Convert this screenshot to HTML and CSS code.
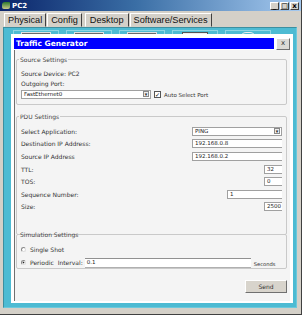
FILE: index.html
```html
<!DOCTYPE html>
<html lang="en">
<head>
<meta charset="UTF-8">
<meta name="viewport" content="width=device-width, initial-scale=1.0">
<title>PC2</title>
<link rel="stylesheet" href="styles.css">
</head>
<body>

<div class="janela">
    <div class="barra-titulo">
        <span class="icone-pc"></span>
        <span class="titulo">PC2</span>
        <div class="controles">
            <span class="ctrl">_</span><span class="ctrl">□</span><span class="ctrl">x</span>
        </div>
    </div>

    <div class="abas">
        <div class="aba">Physical</div>
        <div class="aba">Config</div>
        <div class="aba ativa">Desktop</div>
        <div class="aba">Software/Services</div>
    </div>

    <div class="area">
        <div class="icones">
            <div class="icone"><span class="forma"></span></div>
            <div class="icone"><span class="forma"></span></div>
            <div class="icone"><span class="forma"></span></div>
            <div class="icone"><span class="forma alta"></span></div>
            <div class="icone"><span class="forma redonda"></span></div>
        </div>

        <div class="dialogo">
            <div class="dialogo-topo">
                <div class="dialogo-titulo">Traffic Generator</div>
                <div class="fechar">x</div>
            </div>

            <div class="dialogo-corpo">
                <fieldset class="grupo grupo-origem">
                    <legend>Source Settings</legend>
                    <div class="linha-texto">Source Device: PC2</div>
                    <div class="linha-texto">Outgoing Port:</div>
                    <div class="linha-porta">
                        <div class="select porta">FastEthernet0<span class="seta">▾</span></div>
                        <span class="check marcado">✓</span>
                        <span class="rotulo-check">Auto Select Port</span>
                    </div>
                </fieldset>

                <fieldset class="grupo grupo-pdu">
                    <legend>PDU Settings</legend>
                    <div class="linha">
                        <span>Select Application:</span>
                        <div class="select app">PING<span class="seta">▾</span></div>
                    </div>
                    <div class="linha">
                        <span>Destination IP Address:</span>
                        <div class="campo largo">192.168.0.8</div>
                    </div>
                    <div class="linha">
                        <span>Source IP Address</span>
                        <div class="campo largo">192.168.0.2</div>
                    </div>
                    <div class="linha">
                        <span>TTL:</span>
                        <div class="campo curto">32</div>
                    </div>
                    <div class="linha">
                        <span>TOS:</span>
                        <div class="campo curto">0</div>
                    </div>
                    <div class="linha">
                        <span>Sequence Number:</span>
                        <div class="campo medio">1</div>
                    </div>
                    <div class="linha">
                        <span>Size:</span>
                        <div class="campo curto">2500</div>
                    </div>
                </fieldset>

                <fieldset class="grupo grupo-sim">
                    <legend>Simulation Settings</legend>
                    <div class="linha-radio">
                        <span class="radio"></span>
                        <span>Single Shot</span>
                    </div>
                    <div class="linha-radio">
                        <span class="radio marcado"></span>
                        <span class="periodico">Periodic</span>
                        <span>Interval:</span>
                        <div class="campo intervalo">0.1</div>
                        <span class="segundos">Seconds</span>
                    </div>
                </fieldset>

                <div class="rodape">
                    <div class="botao">Send</div>
                </div>
            </div>
        </div>
    </div>
</div>

</body>
</html>
```

FILE: styles.css
```css
    * {
        box-sizing: border-box;
    }

    body {
        margin: 0;
        font-family: "DejaVu Sans", Verdana, sans-serif;
        background-color: #d4d0c8;
    }

    .janela {
        width: 302px;
        height: 315px;
        background-color: #d4d0c8;
        border-right: 1px solid #404040;
        border-bottom: 1px solid #404040;
        display: flex;
        flex-direction: column;
    }

    .barra-titulo {
        height: 11px;
        background: linear-gradient(to right, #0a246a, #3a6ea5 45%, #a6caf0);
        display: flex;
        align-items: center;
        padding: 0 2px;
    }

    .icone-pc {
        width: 8px;
        height: 7px;
        background: linear-gradient(#2d7a2d, #c9c98a);
        border-radius: 3px 1px 2px 2px;
        margin-right: 2px;
    }

    .titulo {
        color: #fff;
        font-weight: bold;
        font-size: 7px;
    }

    .controles {
        margin-left: auto;
        display: flex;
        gap: 1px;
    }

    .ctrl {
        width: 9px;
        height: 8px;
        background-color: #d4d0c8;
        border: 1px solid;
        border-color: #fff #404040 #404040 #fff;
        font-size: 7px;
        line-height: 6px;
        text-align: center;
        font-weight: bold;
        color: #000;
    }

    .abas {
        height: 16px;
        display: flex;
        align-items: flex-end;
        padding-left: 4px;
        gap: 1px;
    }

    .aba {
        height: 14px;
        border: 1px solid;
        border-color: #fff #404040 transparent #fff;
        font-size: 9.2px;
        line-height: 12px;
        padding: 0 3px;
        color: #111;
        font-family: "Liberation Sans", Arial, sans-serif;
    }

    .aba.ativa {
        margin-left: 2px;
        padding: 0 4px;
    }

    .area {
        position: relative;
        flex: 1;
        margin: 0 4px 6px 3px;
        background-color: #4dbbd3;
        border: 1px solid #3c8fa0;
        border-right-color: #6cc9dc;
        border-bottom-color: #6cc9dc;
    }

    .icones {
        display: flex;
        gap: 7px;
        padding: 2px 0 0 9px;
    }

    .icone {
        width: 46px;
        height: 12px;
        border: 1px solid #8fd6e4;
        border-bottom: none;
        display: flex;
        justify-content: center;
        padding-top: 1px;
    }

    .forma {
        width: 30px;
        height: 8px;
        background-color: #6a6a6a;
        border: 1px solid #e0e0e0;
    }

    .forma.alta {
        width: 26px;
        background-color: #eee;
        border-color: #555;
    }

    .forma.redonda {
        width: 16px;
        border-radius: 6px 6px 0 0;
        background-color: transparent;
        border-color: #eee;
    }

    /* janela do gerador de trafego, por cima dos icones */
    .dialogo {
        position: absolute;
        left: 7px;
        top: 6px;
        width: 282px;
        height: 269px;
        background-color: #fff;
        padding: 4px 3px 2px 3px;
        display: flex;
        flex-direction: column;
    }

    .dialogo-topo {
        display: flex;
        gap: 2px;
        height: 12px;
    }

    .dialogo-titulo {
        flex: 1;
        background-color: #0000ff;
        color: #fff;
        font-weight: bold;
        font-size: 7.5px;
        line-height: 11px;
        padding-left: 2px;
        height: 11px;
    }

    .fechar {
        width: 14px;
        height: 12px;
        background-color: #dcdad5;
        border: 1px solid;
        border-color: #fff #707070 #707070 #fff;
        font-size: 7px;
        line-height: 9px;
        text-align: center;
        color: #333;
    }

    .dialogo-corpo {
        flex: 1;
        background-color: #f4f4f4;
        border-left: 1px solid #707070;
        padding: 6px 3px 0 1px;
        font-size: 6px;
        color: #333;
    }

    .grupo {
        margin: 0;
        border: 1px solid #c9c9c9;
        border-radius: 2px;
        padding: 0 4px 0 4px;
    }

    .grupo legend {
        padding: 0 1px;
        margin-left: -2px;
        color: #444;
        font-size: 6px;
    }

    .grupo-origem {
        height: 49px;
        padding-top: 6px;
    }

    .linha-texto {
        height: 10px;
        line-height: 10px;
    }

    .linha-porta {
        display: flex;
        align-items: center;
        margin-top: 1px;
    }

    .select {
        height: 9px;
        background-color: #fff;
        border: 1px solid #a0a0a0;
        font-size: 5.5px;
        line-height: 7px;
        padding-left: 2px;
        display: flex;
        justify-content: space-between;
        color: #222;
    }

    .seta {
        width: 6px;
        height: 6px;
        margin: 0 1px;
        border: 1px solid #888;
        background-color: #eee;
        font-size: 5px;
        line-height: 4px;
        text-align: center;
    }

    .select.porta {
        width: 130px;
    }

    .check {
        width: 7px;
        height: 7px;
        margin-left: 3px;
        border: 1px solid #555;
        background-color: #fff;
        font-size: 6px;
        line-height: 5px;
        text-align: center;
        color: #000;
    }

    .rotulo-check {
        margin-left: 3px;
        font-size: 5.5px;
    }

    .grupo-pdu {
        margin-top: 8px;
        height: 122px;
        padding-top: 5px;
    }

    .linha {
        display: flex;
        justify-content: space-between;
        align-items: center;
        height: 12.6px;
        font-weight: 500;
    }

    .campo {
        height: 9px;
        background-color: #fff;
        border: 1px solid #a0a0a0;
        border-right: none;
        font-size: 5.5px;
        line-height: 7px;
        padding-left: 2px;
        color: #222;
    }

    .select.app,
    .campo.largo {
        width: 90px;
    }

    .campo.curto {
        width: 18px;
    }

    .campo.medio {
        width: 55px;
    }

    .grupo-sim {
        margin-top: -4px;
        height: 38px;
        padding-top: 5px;
    }

    .linha-radio {
        display: flex;
        align-items: center;
        height: 13px;
    }

    .radio {
        width: 5px;
        height: 5px;
        border-radius: 50%;
        border: 1px solid #888;
        border-color: #888 #ddd #ddd #888;
        margin-right: 4px;
        background-color: #fff;
    }

    .radio.marcado {
        background: radial-gradient(#222 40%, #fff 50%);
    }

    .periodico {
        margin-right: 4px;
    }

    .campo.intervalo {
        width: 166px;
        margin-left: 2px;
        height: 10px;
        border: none;
        border-top: 1px solid #909090;
        border-bottom: 1px solid #b0b0b0;
    }

    .segundos {
        margin-left: 3px;
        font-size: 5.2px;
        padding-top: 2px;
    }

    .rodape {
        display: flex;
        justify-content: flex-end;
        padding-top: 11px;
    }

    .botao {
        width: 42px;
        height: 13px;
        background-color: #d8d4cc;
        border: 1px solid;
        border-color: #fff #707070 #707070 #fff;
        text-align: center;
        font-size: 6px;
        line-height: 11px;
        color: #333;
    }
```
